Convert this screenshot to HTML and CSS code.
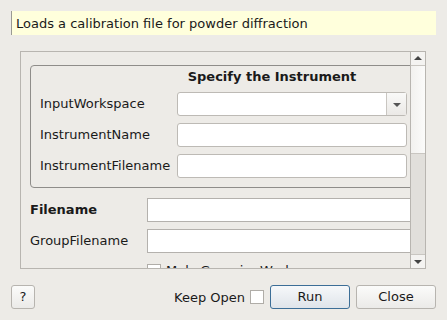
FILE: index.html
```html
<!DOCTYPE html>
<html>
<head>
    <meta charset="UTF-8">
    <title>LoadCalFile</title>
    <link rel="stylesheet" href="styles.css">
</head>
<body>
<div class="m-dlg">
    <div class="u-desc">Loads a calibration file for powder diffraction</div>

    <div class="m-scroll">
        <div class="u-view">
            <div class="u-inner">
                <div class="m-group">
                    <div class="u-title">Specify the Instrument</div>
                    <div class="row">
                        <label class="lbl">InputWorkspace</label>
                        <div class="combo"><span class="combo-arr"></span></div>
                    </div>
                    <div class="row">
                        <label class="lbl">InstrumentName</label>
                        <div class="edit"></div>
                    </div>
                    <div class="row">
                        <label class="lbl">InstrumentFilename</label>
                        <div class="edit"></div>
                    </div>
                </div>
                <div class="row row-out">
                    <label class="lbl lbl-out bold">Filename</label>
                    <div class="edit edit-wide"></div>
                </div>
                <div class="row row-out">
                    <label class="lbl lbl-out">GroupFilename</label>
                    <div class="edit edit-wide"></div>
                </div>
                <div class="row row-out row-chk">
                    <span class="chk"></span><span class="chk-txt">MakeGroupingWorkspace</span>
                </div>
            </div>
        </div>
        <div class="u-bar">
            <span class="bar-btn"><i class="tri up"></i></span>
            <span class="bar-handle"></span>
            <span class="bar-track"></span>
            <span class="bar-btn"><i class="tri"></i></span>
        </div>
    </div>

    <div class="m-foot">
        <a href="javascript:;" class="btn btn-help">?</a>
        <span class="keep">Keep Open</span>
        <span class="chk chk-keep"></span>
        <a href="javascript:;" class="btn btn-run">Run</a>
        <a href="javascript:;" class="btn">Close</a>
    </div>
</div>
</body>
</html>
```

FILE: styles.css
```css
*{ margin: 0; padding: 0; box-sizing: border-box; text-decoration: none;}
body {background: #edebe7; font-family: "DejaVu Sans", sans-serif; font-size: 13px; color: #1a1a1a;}
.m-dlg {width: 447px; height: 320px; padding: 11px 11px 0 11px; display: flex; flex-direction: column;}
.u-desc {height: 24px; background: #ffffdc; border-left: 1px solid #9a9a94; padding: 5px 0 0 4px; line-height: 16px;}

.m-scroll {margin: 16px 10px 0 9px; height: 218px; border: 1px solid #b8b5b0; display: flex;}
.u-view {flex: 1; overflow: hidden;}
.u-inner {width: 520px; padding: 13px 0 0 9px;}

.m-group {border: 1px solid #8f8d8a; border-radius: 4px; height: 123px; padding: 3px 0 0 9px;}
.u-title {font-weight: bold; text-align: center; width: 464px; line-height: 16px; height: 23px;}
.row {display: flex; align-items: center; height: 24px; margin-bottom: 7px;}
.lbl {width: 137px; line-height: 16px;}
.combo, .edit {width: 230px; height: 24px; background: #fff; border: 1px solid #bdbab5; border-radius: 3px; position: relative;}
.combo-arr {position: absolute; right: 0; top: 0; width: 20px; height: 22px; border-left: 1px solid #c9c6c1; background: linear-gradient(#f9f9f8, #ebe9e6);}
.combo-arr:after {content: ""; position: absolute; left: 6px; top: 10px; border: 4px solid transparent; border-top: 4px solid #555; border-bottom: 0;}

.row-out {margin-bottom: 7px;}
.m-group + .row-out {margin-top: 10px;}
.lbl-out {width: 117px;}
.bold {font-weight: bold;}
.edit-wide {width: 300px; border-radius: 0; border-color: #b4b1ad;}
.row-chk {align-items: flex-start; padding: 4px 0 0 117px; gap: 5px;}
.chk-txt {line-height: 16px; margin-top: -1px;}

.chk {display: inline-block; width: 14px; height: 14px; background: #fff; border: 1px solid #b0ada8;}

.u-bar {width: 15px; border-left: 1px solid #b8b5b0; display: flex; flex-direction: column;}
.bar-btn {height: 14px; background: #f4f3f1; position: relative; border-bottom: 1px solid #c9c6c1;}
.bar-btn:last-child {border-bottom: 0; border-top: 1px solid #c9c6c1;}
.bar-handle {height: 88px; background: linear-gradient(90deg, #f2f1ef, #fbfbfa); border-bottom: 1px solid #c9c6c1;}
.bar-track {flex: 1; background: #e1dfdb;}
.tri {position: absolute; left: 3px; top: 5px; border: 4px solid transparent; border-top: 4px solid #444; border-bottom: 0;}
.tri.up {border-top: 0; border-bottom: 4px solid #444; top: 4px;}

.m-foot {margin-top: 16px; display: flex; align-items: center; height: 24px;}
.btn {display: inline-block; height: 24px; width: 80px; border: 1px solid #b7b4af; border-radius: 3px; background: linear-gradient(#fbfbfa, #ebeae8); color: #1a1a1a; text-align: center; line-height: 22px;}
.btn-help {width: 24px; margin-right: auto;}
.keep {margin-right: 5px;}
.chk-keep {margin-right: 6px;}
.btn-run {border-color: #3c6e97; background: linear-gradient(#f6f8fa, #dfe4ea); margin-right: 6px;}
```
